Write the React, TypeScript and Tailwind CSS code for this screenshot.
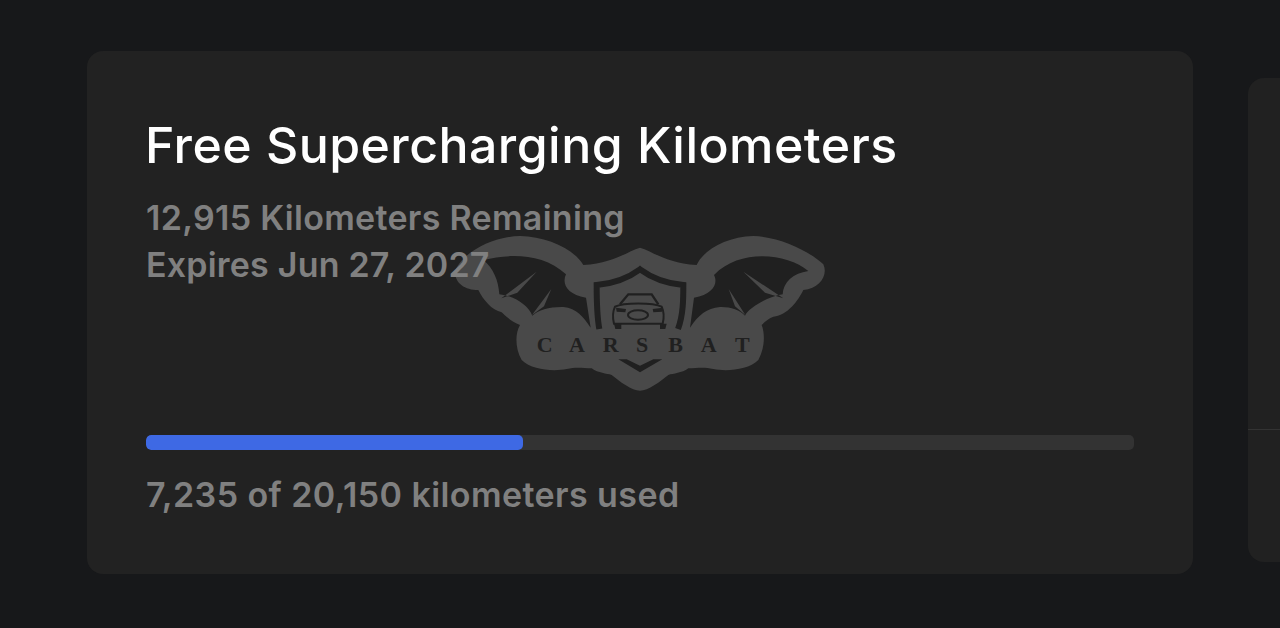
function CarsbatMark() {
  return (
    <svg viewBox="0 0 1200 525" className="absolute left-[353px] top-[174px] h-[175px] w-[400px]">
      {/* sticker outline */}
      <path
        fill="#494949"
        d="M600,68 C640,80 680,115 770,120 C790,75 860,35 940,33 C1020,35 1110,80 1150,118 C1165,150 1140,190 1090,195 C1075,225 1045,270 1000,275 C985,280 975,290 965,300 C975,325 975,370 955,405 C925,435 860,440 820,432 C790,425 770,430 745,430 C725,445 700,445 685,450 C660,470 625,497 600,497 C575,497 540,470 515,450 C500,445 475,445 455,430 C430,430 410,425 380,432 C340,440 275,435 245,405 C225,370 225,325 240,300 C205,285 195,270 185,262 C155,255 130,225 115,195 C75,195 45,175 45,140 C60,90 150,35 240,33 C320,35 400,70 430,120 C520,115 560,80 600,68 Z"
      />
      {/* left wing */}
      <path
        fill="#202020"
        fillRule="evenodd"
        d="M130,105 C210,85 310,85 378,148 C365,175 380,208 438,218 L452,308 C430,275 410,250 370,246 C330,245 295,255 277,272 C265,240 220,212 178,208 C175,165 160,130 130,105 Z M290,140 L184,220 L232,203 Z M334,192 L276,270 L312,244 Z"
      />
      {/* right wing */}
      <path
        fill="#202020"
        fillRule="evenodd"
        d="M1105,138 C1040,85 900,70 822,150 C835,175 820,208 762,218 L750,308 C775,270 800,250 840,246 C870,245 900,255 915,272 C930,245 985,215 1028,208 C1030,170 1060,145 1105,138 Z M910,140 L1030,220 L975,203 Z M866,192 L916,270 L885,244 Z"
      />
      {/* shield */}
      <path
        fill="none"
        stroke="#202020"
        strokeWidth="18"
        d="M478,312 C470,270 470,220 470,180 C530,175 570,155 600,133 C630,155 670,175 730,180 C730,220 730,270 714,312"
      />
      <path fill="#202020" d="M535,403 L600,442 L667,403 L640,403 L600,422 L560,403 Z" />
      {/* car */}
      <g fill="none" stroke="#202020" strokeWidth="6">
        <path d="M540,238 L565,208 L635,208 L655,238" strokeWidth="7" />
        <path d="M525,245 C550,232 640,232 665,245 C672,260 672,280 668,296 L522,296 C518,280 518,260 525,245 Z" />
        <ellipse cx="594" cy="270" rx="30" ry="14" />
      </g>
      <g fill="#202020">
        <path d="M522,296 H544 V312 H526 Z" />
        <path d="M660,296 H680 L676,312 H660 Z" />
        <path d="M528,248 L558,252 L556,262 L530,260 Z" />
        <path d="M668,248 L638,252 L640,262 L666,260 Z" />
      </g>
      <text
        x="290 387 488 588 685 782 885"
        y="381"
        fill="#202020"
        fontFamily="'Liberation Serif', serif"
        fontWeight="700"
        fontSize="66"
      >
        CARSBAT
      </text>
    </svg>
  )
}

export default function App() {
  return (
    <div className="flex h-[628px] w-[1280px] items-start gap-[55px] overflow-hidden bg-[#17181a] pl-[87px] pt-[51px] font-['Inter',sans-serif]">
      {/* Main card */}
      <div className="relative flex h-[523px] w-[1106px] shrink-0 flex-col rounded-2xl bg-[#222222] px-[59px] pt-[63px]">
        <CarsbatMark />
        <h1 className="relative -ml-px text-[50px] font-medium leading-[62px] tracking-[0.45px] text-white">
          Free Supercharging Kilometers
        </h1>
        <div className="relative mt-[18px] text-[34px] font-semibold leading-[47px] tracking-[0.3px] text-[#808080]">
          <p>12,915 Kilometers Remaining</p>
          <p className="tracking-[0.2px]">Expires Jun 27, 2027</p>
        </div>
        <div className="relative mt-[147px] h-[15px] w-full overflow-hidden rounded-[5px] bg-[#333333]">
          <div className="h-full w-[377px] rounded-[5px] bg-[#3e69e4]" />
        </div>
        <p className="relative mt-[21px] text-[34px] font-semibold leading-[47px] tracking-[0.42px] text-[#808080]">
          7,235 of 20,150 kilometers used
        </p>
      </div>

      {/* Next card, cut off by the window */}
      <div className="mt-[27px] flex h-[484px] w-[200px] shrink-0 flex-col rounded-2xl bg-[#212121]">
        <div className="h-[352px] border-b border-[#333333]" />
      </div>
    </div>
  )
}
